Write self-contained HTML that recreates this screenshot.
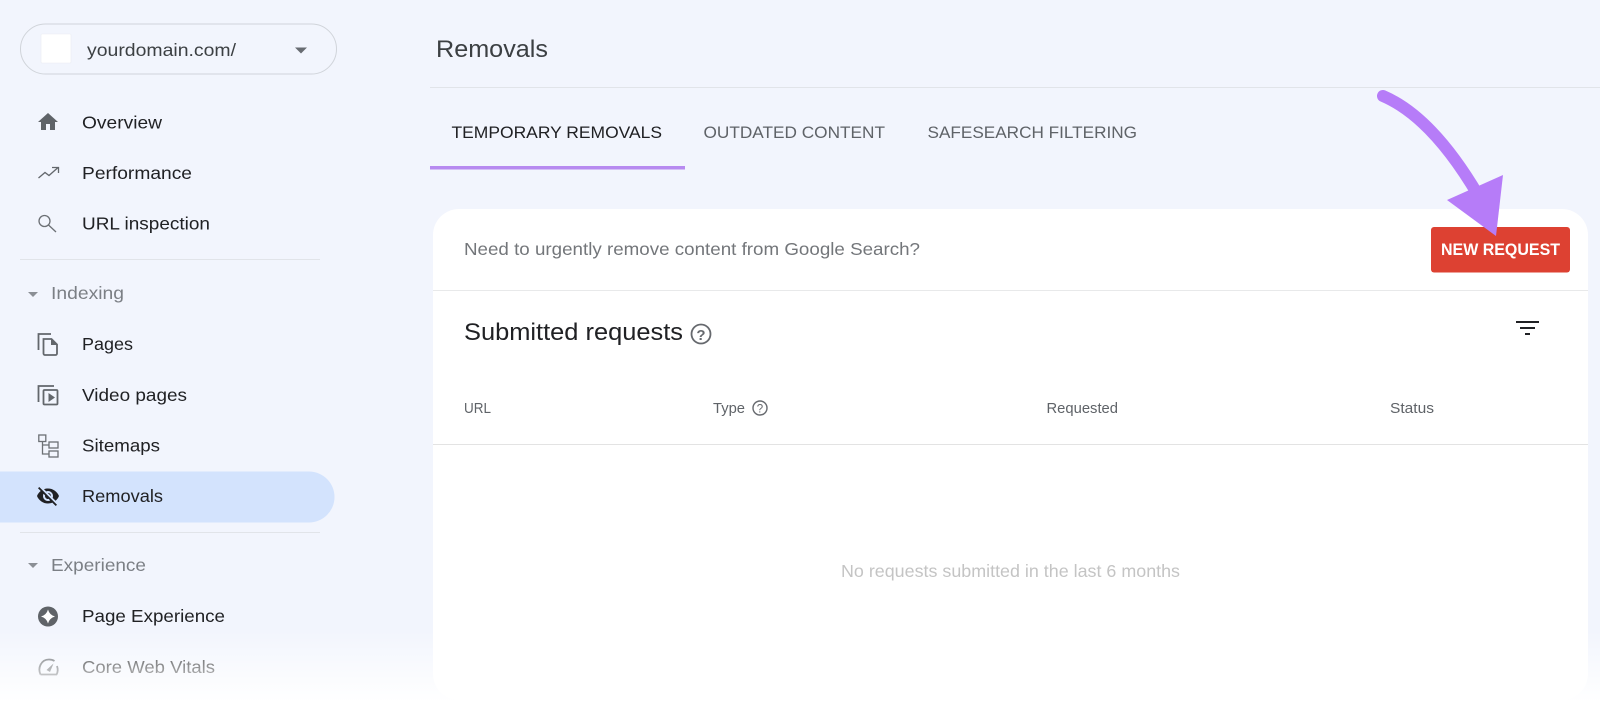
<!DOCTYPE html>
<html><head><meta charset="utf-8"><title>Removals</title>
<style>
html,body{margin:0;padding:0;background:#fff}
svg{display:block;position:absolute;left:0;top:0}
text{font-family:"Liberation Sans",sans-serif;white-space:pre}
.n{font-size:17.500px;fill:#202124}
.g{font-size:17.500px;fill:#7b7f85}
.t{font-size:16.800px;fill:#5f6368}
.h{font-size:15px;fill:#5f6368}
.i{fill:none;stroke:#63676c;stroke-width:1.800}
</style></head>
<body>
<svg width="1600" height="720" viewBox="0 0 1600 720" xmlns="http://www.w3.org/2000/svg">
<defs><linearGradient id="f" x1="0" y1="0" x2="0" y2="1"><stop offset="0" stop-color="#fff" stop-opacity="0"/><stop offset="1" stop-color="#fff" stop-opacity="1"/></linearGradient></defs>
<rect width="1600" height="720" fill="#f2f5fd"/>

<!-- property selector -->
<rect x="20.500" y="24" width="316" height="50" rx="25" fill="#f2f5fd" stroke="#d0d4da"/>
<rect x="41" y="34" width="30" height="29" rx="1" fill="#fff" stroke="#e9ecf2" stroke-width=".6"/>
<text class="n" x="87" y="56" textLength="149" lengthAdjust="spacingAndGlyphs" style="fill:#3c4043">yourdomain.com/</text>
<path d="M295 47.500h12l-6 6z" fill="#686c72"/>

<!-- nav top -->
<path d="M10 20v-6h4v6h5v-8h3L12 3 2 12h3v8z" transform="translate(36 110)" fill="#5f6368"/>
<text class="n" x="82" y="128.500" textLength="80" lengthAdjust="spacingAndGlyphs">Overview</text>
<path d="M38.500 178L45 172.500L49 175.500L57.500 168M52 167.500H58.500V173" fill="none" stroke="#63676c" stroke-width="1.300"/>
<text class="n" x="82" y="179" textLength="110" lengthAdjust="spacingAndGlyphs">Performance</text>
<circle cx="44.500" cy="221" r="5.500" fill="none" stroke="#6c7075" stroke-width="1.300"/>
<path d="M48.500 225L56 232" fill="none" stroke="#6c7075" stroke-width="1.300"/>
<text class="n" x="82" y="229.500" textLength="128" lengthAdjust="spacingAndGlyphs">URL inspection</text>
<rect x="20" y="259" width="300" height="1" fill="#e1e4e9"/>

<!-- indexing -->
<path d="M28 292h10l-5 5z" fill="#8b8f95"/>
<text class="g" x="51" y="299" textLength="73" lengthAdjust="spacingAndGlyphs">Indexing</text>
<path class="i" d="M38.500 350V334H51"/>
<path class="i" d="M43.500 339H51.500L57 344.500V353.500A1.500 1.500 0 0 1 55.500 355H45A1.500 1.500 0 0 1 43.500 353.500Z"/>
<path d="M51 339L57 345H51z" fill="#63676c"/>
<text class="n" x="82" y="350" textLength="51" lengthAdjust="spacingAndGlyphs">Pages</text>
<path class="i" d="M38.500 402V386H54"/>
<rect class="i" x="43.500" y="390" width="14" height="14.500" rx="1"/>
<path d="M48.500 393L55 397.500L48.500 402z" fill="#63676c"/>
<text class="n" x="82" y="401" textLength="105" lengthAdjust="spacingAndGlyphs">Video pages</text>
<g fill="none" stroke="#6c7075" stroke-width="1.300">
<rect x="38.800" y="435" width="7" height="6.500"/>
<rect x="49" y="442" width="9" height="6"/>
<rect x="49" y="451" width="9" height="6"/>
<path d="M42.500 441.500V454H49M42.500 445H49"/>
</g>
<text class="n" x="82" y="451.500" textLength="78" lengthAdjust="spacingAndGlyphs">Sitemaps</text>
<path d="M0 471.500H309a25.500 25.500 0 0 1 0 51H0z" fill="#d3e3fd"/>
<path d="M12 7c2.760 0 5 2.240 5 5 0 .65-.13 1.260-.36 1.830l2.920 2.920c1.510-1.260 2.700-2.890 3.430-4.750-1.730-4.390-6-7.500-11-7.500-1.400 0-2.740.25-3.980.7l2.160 2.160C10.740 7.130 11.350 7 12 7zM2 4.270l2.280 2.280.46.46C3.080 8.300 1.780 10.020 1 12c1.730 4.390 6 7.500 11 7.500 1.550 0 3.030-.3 4.380-.84l.42.42L19.730 22 21 20.730 3.270 3 2 4.270zM7.530 9.800l1.550 1.550c-.05.21-.08.43-.08.65 0 1.660 1.340 3 3 3 .22 0 .44-.03.65-.08l1.550 1.550c-.67.33-1.410.53-2.200.53-2.760 0-5-2.240-5-5 0-.79.2-1.530.53-2.200zm4.310-.78l3.150 3.150.02-.16c0-1.660-1.340-3-3-3l-.17.010z" transform="translate(36 484)" fill="#202124"/>
<text class="n" x="82" y="502" textLength="81" lengthAdjust="spacingAndGlyphs">Removals</text>
<rect x="20" y="532" width="300" height="1" fill="#e1e4e9"/>

<!-- experience -->
<path d="M28 563h10l-5 5z" fill="#8b8f95"/>
<text class="g" x="51" y="571" textLength="95" lengthAdjust="spacingAndGlyphs">Experience</text>
<circle cx="48" cy="616.500" r="10" fill="#5f6368"/>
<path d="M48 609.500Q49.500 615 55 616.500Q49.500 618 48 623.500Q46.500 618 41 616.500Q46.500 615 48 609.500z" fill="#fff"/>
<text class="n" x="82" y="622" textLength="143" lengthAdjust="spacingAndGlyphs">Page Experience</text>
<path fill="none" stroke="#5f6368" stroke-width="1.800" stroke-linejoin="round" d="M40.500 674.500C37.500 668 41 659.500 49 659.500C51 659.500 53 660 54.500 661M57 666C58 669 58 672 56.500 674.500H40.500"/>
<path d="M46.500 670L53.500 663.500L50 672z" fill="#5f6368"/>
<text class="n" x="82" y="673" textLength="133" lengthAdjust="spacingAndGlyphs">Core Web Vitals</text>

<!-- header -->
<text x="436" y="57" font-size="24.500" fill="#3c4043" textLength="112" lengthAdjust="spacingAndGlyphs">Removals</text>
<rect x="430" y="87" width="1170" height="1" fill="#e1e4e9"/>

<!-- tabs -->
<text class="t" x="451.500" y="138" textLength="210.500" lengthAdjust="spacingAndGlyphs" style="fill:#202124">TEMPORARY REMOVALS</text>
<text class="t" x="703.500" y="138" textLength="181.500" lengthAdjust="spacingAndGlyphs">OUTDATED CONTENT</text>
<text class="t" x="927.500" y="138" textLength="209.500" lengthAdjust="spacingAndGlyphs">SAFESEARCH FILTERING</text>
<rect x="430" y="166" width="255" height="3.500" fill="#b78af0"/>

<!-- card -->
<rect x="433" y="209" width="1155" height="491" rx="26" fill="#fff"/>
<text x="464" y="255" font-size="17.500" fill="#73767a" textLength="456" lengthAdjust="spacingAndGlyphs">Need to urgently remove content from Google Search?</text>
<rect x="1431" y="227" width="139" height="45.500" rx="3" fill="#dd4132"/>
<text x="1441" y="255" font-size="17" font-weight="700" fill="#fff" textLength="119" lengthAdjust="spacingAndGlyphs">NEW REQUEST</text>
<rect x="433" y="290" width="1155" height="1" fill="#e8e9ea"/>

<text x="464" y="340" font-size="24.500" fill="#202124" textLength="219" lengthAdjust="spacingAndGlyphs">Submitted requests</text>
<circle cx="701" cy="334" r="9.500" fill="none" stroke="#66696e" stroke-width="1.800"/>
<text x="701" y="340" font-size="15" font-weight="700" fill="#66696e" text-anchor="middle">?</text>
<path d="M1516 322H1539M1520 328H1535M1525 334H1530" stroke="#202124" stroke-width="2" fill="none"/>

<text class="h" x="464" y="413" textLength="27" lengthAdjust="spacingAndGlyphs">URL</text>
<text class="h" x="713" y="413" textLength="32" lengthAdjust="spacingAndGlyphs">Type</text>
<circle cx="760" cy="408" r="7" fill="none" stroke="#66696e" stroke-width="1.400"/>
<text x="760" y="412.500" font-size="11.500" fill="#66696e" text-anchor="middle">?</text>
<text class="h" x="1046.500" y="413" textLength="71.500" lengthAdjust="spacingAndGlyphs">Requested</text>
<text class="h" x="1390" y="413" textLength="44" lengthAdjust="spacingAndGlyphs">Status</text>
<rect x="433" y="444" width="1155" height="1" fill="#e3e3e3"/>

<text x="841" y="577" font-size="17.500" fill="#c4c4c4" textLength="339" lengthAdjust="spacingAndGlyphs">No requests submitted in the last 6 months</text>

<!-- bottom fade -->
<rect x="0" y="630" width="1600" height="72" fill="url(#f)"/>
<rect x="0" y="702" width="1600" height="18" fill="#fff"/>

<!-- arrow -->
<path d="M1383 96Q1432 117 1478 195" fill="none" stroke="#b67cf8" stroke-width="12" stroke-linecap="round"/>
<path d="M1503 175L1447 200L1496 236z" fill="#b67cf8"/>
</svg>
</body></html>
